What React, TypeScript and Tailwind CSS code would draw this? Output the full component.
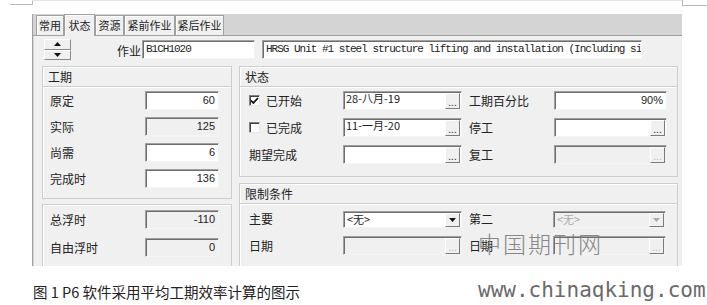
import type { ReactNode } from "react";

const ui = "font-['SimSun','Noto_Sans_CJK_SC',sans-serif]";

function Sunken({ className = "", children }: { className?: string; children?: ReactNode }) {
  return (
    <div
      className={`relative flex border border-t-[#a0a0a0] border-l-[#a0a0a0] border-b-[#f4f4f4] border-r-[#f4f4f4] shadow-[inset_1px_1px_0_#6e6e6e] ${className}`}
    >
      {children}
    </div>
  );
}

function Ellipsis({ disabled }: { disabled?: boolean }) {
  return (
    <div
      className={`absolute right-[1px] top-[1px] bottom-[0px] w-[15px] flex items-end justify-center border-t border-l border-t-white border-l-white border-b border-r border-b-[#7a7a7a] border-r-[#7a7a7a] bg-[#f0f0f0] text-[10px] leading-[10px] font-['Liberation_Sans',sans-serif] ${
        disabled ? "text-[#b0b0b0]" : "text-[#222]"
      }`}
    >
      ...
    </div>
  );
}

function NumField({ value, disabled }: { value: string; disabled?: boolean }) {
  return (
    <Sunken className={`w-[74px] h-[19px] justify-end items-center pr-[3px] ${disabled ? "bg-[#f0f0f0]" : "bg-white"}`}>
      <span className="text-[11px] text-[#222] font-['Liberation_Sans',sans-serif]">{value}</span>
    </Sunken>
  );
}

function DateField({ value, disabled, w }: { value?: string; disabled?: boolean; w: "a" | "b" }) {
  return (
    <Sunken
      className={`${w === "a" ? "w-[119px]" : "w-[113px]"} h-[19px] items-start pl-[2px] ${
        disabled ? "bg-[#f0f0f0]" : "bg-white"
      }`}
    >
      <span className={`text-[11px] leading-[13px] text-[#222] ${ui}`}>{value}</span>
      <Ellipsis disabled={disabled} />
    </Sunken>
  );
}

function Combo({ disabled, w }: { disabled?: boolean; w: "a" | "b" }) {
  return (
    <Sunken
      className={`${w === "a" ? "w-[119px]" : "w-[113px]"} h-[17px] items-center pl-[3px] ${
        disabled ? "bg-[#f0f0f0] text-[#a8a8a8]" : "bg-white text-[#222]"
      }`}
    >
      <span className={`text-[11px] leading-[13px] ${ui}`}>&lt;无&gt;</span>
      <div className="absolute right-[1px] top-[1px] bottom-[0px] w-[15px] flex items-center justify-center border-t border-l border-t-white border-l-white border-b border-r border-b-[#7a7a7a] border-r-[#7a7a7a] bg-[#f0f0f0]">
        <svg width="7" height="4" viewBox="0 0 7 4">
          <path d="M0 0h7L3.5 4z" fill={disabled ? "#a8a8a8" : "#111"} />
        </svg>
      </div>
    </Sunken>
  );
}

function Check({ checked }: { checked?: boolean }) {
  return (
    <div className="w-[11px] h-[11px] bg-white border border-t-[#808080] border-l-[#808080] border-b-[#e8e8e8] border-r-[#e8e8e8] shadow-[inset_1px_1px_0_#404040] flex items-center justify-center">
      {checked && (
        <svg width="9" height="8" viewBox="0 0 9 8">
          <path d="M1 3.5l2.3 2.5L8 1" stroke="#111" strokeWidth="1.8" fill="none" />
        </svg>
      )}
    </div>
  );
}

function Panel({ title, className = "", children }: { title?: string; className?: string; children: ReactNode }) {
  return (
    <div className={`border border-[#cdcdcd] shadow-[inset_1px_1px_0_#fff] bg-[#f0f0f0] ${className}`}>
      {title && (
        <div className="h-[20px] border-b border-[#cdcdcd] shadow-[0_1px_0_#fff] pl-[5px] flex items-center text-[12px] text-[#222]">
          {title}
        </div>
      )}
      {children}
    </div>
  );
}

const tabs = ["常用", "状态", "资源", "紧前作业", "紧后作业"];
const tabW = ["w-[28px]", "w-[31px]", "w-[29px]", "w-[51px]", "w-[49px]"];

export default function App() {
  return (
    <div className={`relative w-[707px] h-[305px] bg-white overflow-hidden ${ui}`}>
      {/* page corner marks */}
      <div className="absolute left-[10px] top-[4px] w-[22px] h-px bg-[#b8b8b8]" />
      <div className="absolute left-[32px] top-0 w-px h-[5px] bg-[#b8b8b8]" />
      <div className="absolute left-[682px] top-0 w-px h-[5px] bg-[#b8b8b8]" />
      <div className="absolute left-[682px] top-[5px] w-[25px] h-px bg-[#b8b8b8]" />
      <div className="absolute left-[32px] top-0 w-[650px] h-px bg-[#e4e4e4]" />

      {/* dialog */}
      <div className="ml-[32px] mt-[14px] w-[650px] h-[252px] flex flex-col bg-[#d4d4d4] border-l border-[#a0a0a0]">
        {/* tab strip */}
        <div className="h-[22px] flex items-end pl-[3px] border-b border-[#a0a0a0]">
          {tabs.map((t, i) => (
            <div
              key={t}
              className={`${tabW[i]} ${
                i === 1 ? "h-[22px] -mb-px relative z-10" : "h-[20px]"
              } shrink-0 whitespace-nowrap bg-[#f0f0f0] border-t border-l border-r border-t-[#a0a0a0] border-l-[#a0a0a0] border-r-[#a0a0a0] shadow-[inset_1px_1px_0_#fff] flex items-center justify-center text-[11px] text-[#222]`}
            >
              {t}
            </div>
          ))}
        </div>

        {/* content */}
        <div className="flex-1 ml-[1px] bg-[#f0f0f0] overflow-hidden flex flex-col">
          {/* top row */}
          <div className="flex items-start pt-[3px] pl-[10px]">
            <div className="w-[27px] h-[21px] flex flex-col">
              {["up", "down"].map((d) => (
                <div
                  key={d}
                  className="flex-1 flex items-center justify-center bg-[#f0f0f0] border-t border-l border-t-white border-l-white border-b border-r border-b-[#8a8a8a] border-r-[#8a8a8a]"
                >
                  <svg width="7" height="4" viewBox="0 0 7 4">
                    <path d={d === "up" ? "M0 4h7L3.5 0z" : "M0 0h7L3.5 4z"} fill="#111" />
                  </svg>
                </div>
              ))}
            </div>
            <span className="ml-[46px] mt-[3px] w-[25px] text-[12px] text-[#222]">作业</span>
            <Sunken className="mt-[1px] w-[113px] h-[19px] bg-white items-center pl-[3px]">
              <span className="text-[11px] tracking-[-1px] text-[#222] font-['Liberation_Mono',monospace]">B1CH1020</span>
            </Sunken>
            <Sunken className="mt-[1px] ml-[7px] w-[380px] h-[19px] bg-white items-center pl-[3px] overflow-hidden">
              <span className="text-[11px] tracking-[-1px] whitespace-nowrap text-[#222] font-['Liberation_Mono',monospace]">
                HRSG Unit #1 steel structure lifting and installation (Including si
              </span>
            </Sunken>
          </div>

          {/* panels */}
          <div className="flex gap-[7px] pl-[8px] mt-[6px]">
            {/* left column */}
            <div className="w-[190px] flex flex-col gap-[5px]">
              <Panel title="工期" className="h-[133px]">
                <div className="flex flex-col gap-[7px] pt-[4px] pl-[7px]">
                  {[
                    ["原定", "60", false],
                    ["实际", "125", true],
                    ["尚需", "6", false],
                    ["完成时", "136", false],
                  ].map(([l, v, d]) => (
                    <div key={l as string} className="flex items-center h-[19px]">
                      <span className="w-[95px] text-[12px] text-[#222]">{l}</span>
                      <NumField value={v as string} disabled={d as boolean} />
                    </div>
                  ))}
                </div>
              </Panel>
              <Panel className="h-[80px]">
                <div className="flex flex-col gap-[9px] pt-[5px] pl-[7px]">
                  {[
                    ["总浮时", "-110"],
                    ["自由浮时", "0"],
                  ].map(([l, v]) => (
                    <div key={l} className="flex items-center h-[19px]">
                      <span className="w-[95px] text-[12px] text-[#222]">{l}</span>
                      <NumField value={v} disabled />
                    </div>
                  ))}
                </div>
              </Panel>
            </div>

            {/* right column */}
            <div className="w-[439px] flex flex-col gap-[6px]">
              <Panel title="状态" className="h-[111px]">
                <div className="flex flex-col gap-[8px] pt-[4px]">
                  <div className="flex items-center h-[19px]">
                    <div className="w-[103px] pl-[9px] flex items-center gap-[6px] text-[12px] text-[#222]">
                      <Check checked />
                      <span>已开始</span>
                    </div>
                    <DateField w="a" value="28-八月-19" />
                    <span className="ml-[7px] w-[85px] text-[12px] text-[#222]">工期百分比</span>
                    <Sunken className="w-[113px] h-[19px] bg-white justify-end items-center pr-[3px]">
                      <span className="text-[11px] text-[#222] font-['Liberation_Sans',sans-serif]">90%</span>
                    </Sunken>
                  </div>
                  <div className="flex items-center h-[19px]">
                    <div className="w-[103px] pl-[9px] flex items-center gap-[6px] text-[12px] text-[#222]">
                      <Check />
                      <span>已完成</span>
                    </div>
                    <DateField w="a" value="11-一月-20" />
                    <span className="ml-[7px] w-[85px] text-[12px] text-[#222]">停工</span>
                    <DateField w="b" />
                  </div>
                  <div className="flex items-center h-[19px]">
                    <span className="w-[103px] pl-[9px] text-[12px] text-[#222]">期望完成</span>
                    <DateField w="a" />
                    <span className="ml-[7px] w-[85px] text-[12px] text-[#222]">复工</span>
                    <DateField w="b" disabled />
                  </div>
                </div>
              </Panel>
              <Panel title="限制条件" className="h-[100px]">
                <div className="flex flex-col gap-[8px] pt-[6px]">
                  <div className="flex items-center h-[18px]">
                    <span className="w-[103px] pl-[9px] text-[12px] text-[#222]">主要</span>
                    <Combo w="a" />
                    <span className="ml-[7px] w-[84px] text-[12px] text-[#222]">第二</span>
                    <Combo w="b" disabled />
                  </div>
                  <div className="flex items-center h-[19px]">
                    <span className="w-[103px] pl-[9px] text-[12px] text-[#222]">日期</span>
                    <DateField w="a" disabled />
                    <span className="ml-[7px] w-[84px] text-[12px] text-[#222]">日期</span>
                    <DateField w="b" disabled />
                  </div>
                </div>
              </Panel>
            </div>
          </div>
        </div>
      </div>

      {/* caption */}
      <p className="mt-[16px] pl-[33px] text-[14.5px] leading-[20px] text-[#222] font-['Noto_Sans_CJK_SC',sans-serif]">
        图 1 P6 软件采用平均工期效率计算的图示
      </p>

      {/* watermark */}
      <div className="absolute left-[478px] top-[229px] text-[23px] leading-[28px] tracking-[2px] text-[#7c7c7c] font-light font-['Noto_Sans_CJK_SC',sans-serif] opacity-90">
        中国期刊网
      </div>
      <div className="absolute left-[478px] top-[278px] text-[21px] leading-[24px] text-[#6a6a6a] font-['DejaVu_Sans_Mono',monospace]">
        www.chinaqking.com
      </div>
    </div>
  );
}
